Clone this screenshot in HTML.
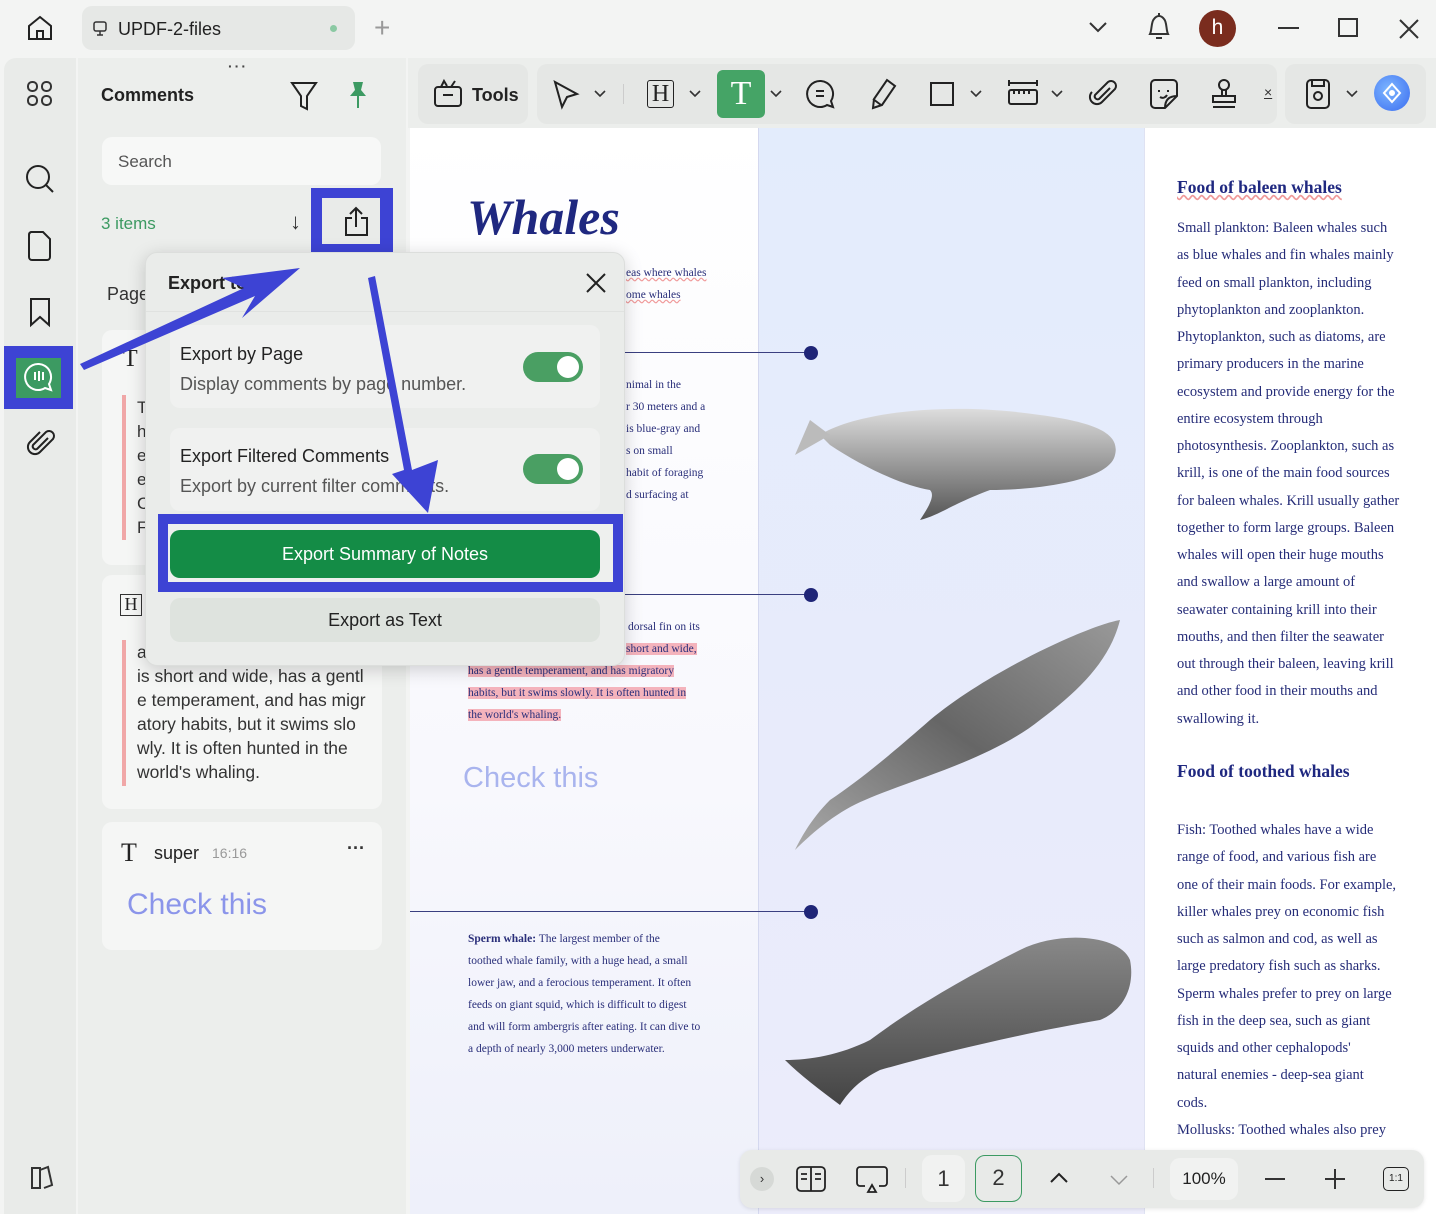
<!DOCTYPE html>
<html><head><meta charset="utf-8"><style>
*{box-sizing:border-box;margin:0;padding:0}
body{width:1436px;height:1214px;overflow:hidden;background:#f3f4f3;font-family:"Liberation Sans",sans-serif;position:relative;color:#222}
.a{position:absolute}
.ser{font-family:"Liberation Serif",serif}
.pt{font-size:11.5px;color:#2a2f7a;line-height:22px;white-space:nowrap}
.rt{font-family:"Liberation Serif",serif;font-size:14.5px;color:#252c78;line-height:27.25px;white-space:nowrap}
.card{background:#f5f6f5;border-radius:10px}
.tog{position:absolute;width:60px;height:30px;border-radius:15px;background:#4a9f63}
.tog:after{content:"";position:absolute;right:4px;top:4px;width:22px;height:22px;border-radius:50%;background:#fff}
svg{overflow:visible}
</style></head><body>
<!-- top bar -->
<svg class="a" style="left:26px;top:14px" width="28" height="28" viewBox="0 0 28 28" fill="none" stroke="#222" stroke-width="2"><path d="M3 12 L14 3 L25 12 V25 H3 Z"/><path d="M11 25 V17 H17 V25"/></svg>
<div class="a" style="left:82px;top:6px;width:273px;height:44px;background:#e6e8e6;border-radius:10px"></div>
<svg class="a" style="left:92px;top:21px" width="16" height="16" viewBox="0 0 16 16" fill="none" stroke="#333" stroke-width="1.5"><rect x="2" y="1" width="12" height="9" rx="2"/><path d="M8 10v4M5 14h6"/></svg>
<div class="a" style="left:118px;top:19px;font-size:18px;color:#222">UPDF-2-files</div>
<div class="a" style="left:330px;top:25px;width:7px;height:7px;border-radius:50%;background:#8bc9a3"></div>
<div class="a" style="left:374px;top:12px;font-size:28px;color:#999;font-weight:300">+</div>
<svg class="a" style="left:1088px;top:20px" width="20" height="14" fill="none" stroke="#333" stroke-width="2"><path d="M2 3l8 8 8-8"/></svg>
<svg class="a" style="left:1146px;top:12px" width="26" height="32" fill="none" stroke="#333" stroke-width="2"><path d="M4 22 C6 18 5 10 8 7 C11 3 15 3 18 7 C21 10 20 18 22 22 Z M10 26 h6"/><path d="M13 1v3"/></svg>
<div class="a" style="left:1199px;top:10px;width:37px;height:37px;border-radius:50%;background:#7a2c1e;color:#fff;font-size:21px;text-align:center;line-height:36px">h</div>
<div class="a" style="left:1278px;top:27px;width:21px;height:2px;background:#333"></div>
<div class="a" style="left:1338px;top:18px;width:20px;height:19px;border:2px solid #333"></div>
<svg class="a" style="left:1399px;top:19px" width="20" height="20" stroke="#333" stroke-width="2"><path d="M1 1l18 18M19 1L1 19"/></svg>

<!-- left rail -->
<div class="a" style="left:4px;top:58px;width:72px;height:1156px;background:#e9ebe9;border-radius:12px 0 0 0"></div>
<svg class="a" style="left:27px;top:81px" width="26" height="26" fill="none" stroke="#333" stroke-width="2"><rect x="1" y="1" width="9" height="9" rx="4"/><rect x="15" y="1" width="9" height="9" rx="4"/><rect x="1" y="15" width="9" height="9" rx="4"/><rect x="15" y="15" width="9" height="9" rx="4"/></svg>
<svg class="a" style="left:25px;top:164px" width="30" height="30" fill="none" stroke="#222" stroke-width="2"><circle cx="13" cy="13" r="11"/><path d="M21 21l7 7"/></svg>
<svg class="a" style="left:28px;top:231px" width="24" height="30" fill="none" stroke="#222" stroke-width="2"><path d="M3 1h12l7 7v18a3 3 0 0 1-3 3H4a3 3 0 0 1-3-3V4a3 3 0 0 1 2-3z"/></svg>
<svg class="a" style="left:29px;top:298px" width="22" height="28" fill="none" stroke="#222" stroke-width="2"><path d="M2 1h18v26l-9-8-9 8z"/></svg>
<div class="a" style="left:4px;top:346px;width:69px;height:63px;background:#3d43d4"></div>
<div class="a" style="left:16px;top:358px;width:45px;height:40px;background:#3c9a62"></div>
<svg class="a" style="left:24px;top:362px" width="30" height="32" fill="none" stroke="#fff" stroke-width="2"><path d="M15 2a13 13 0 1 0 6 24l6 2-2-6A13 13 0 0 0 15 2z"/><path d="M11 10v8M15 9v10M19 10v8"/></svg>
<svg class="a" style="left:28px;top:428px" width="26" height="30" fill="none" stroke="#222" stroke-width="2"><path d="M20 10L9 21a3 3 0 0 1-4-4L18 4a5 5 0 0 1 7 7L12 24a7 7 0 0 1-10-10L12 4"/></svg>
<svg class="a" style="left:28px;top:1164px" width="26" height="28" fill="none" stroke="#333" stroke-width="2"><path d="M4 4h8v20H4zM12 6l8-3 4 18-8 3"/></svg>

<!-- comments panel -->
<div class="a" style="left:78px;top:58px;width:328px;height:1156px;background:#eceeec"></div>
<div class="a" style="left:228px;top:58px;font-size:14px;letter-spacing:2px;color:#444;font-weight:bold">···</div>
<div class="a" style="left:101px;top:85px;font-size:18px;font-weight:bold;color:#222">Comments</div>
<svg class="a" style="left:290px;top:81px" width="28" height="30" fill="none" stroke="#222" stroke-width="2"><path d="M2 2h24L17 15v13l-6-3V15z"/></svg>
<svg class="a" style="left:346px;top:80px" width="24" height="30"><path d="M7 2h10l-2 8 5 6H4l5-6z" fill="#3c9a62"/><path d="M12 16v12" stroke="#3c9a62" stroke-width="2"/></svg>
<div class="a card" style="left:102px;top:137px;width:279px;height:48px;background:#f7f8f7"></div>
<div class="a" style="left:118px;top:152px;font-size:17px;color:#555">Search</div>
<div class="a" style="left:101px;top:214px;font-size:17px;color:#3c9a62">3 items</div>
<div class="a" style="left:290px;top:209px;font-size:22px;color:#333">↓</div>
<div class="a" style="left:311px;top:188px;width:82px;height:68px;background:#3d43d4"></div>
<div class="a" style="left:322px;top:198px;width:58px;height:46px;background:#e9ebe9"></div>
<svg class="a" style="left:343px;top:206px" width="28" height="32" fill="none" stroke="#222" stroke-width="2"><path d="M9 12H3v17h21V12h-6M13 21V2M7 8l6-6 6 6"/></svg>
<div class="a" style="left:107px;top:284px;font-size:18px;color:#333">Page</div>
<div class="a card" style="left:102px;top:330px;width:280px;height:235px"></div>
<div class="a ser" style="left:123px;top:346px;font-size:24px">T</div>
<div class="a" style="left:122px;top:395px;width:4px;height:145px;background:#f0a7a7"></div>
<div class="a" style="left:137px;top:396px;font-size:17px;line-height:24px;color:#333">T<br>h<br>e<br>e<br>C<br>F</div>
<div class="a card" style="left:102px;top:575px;width:280px;height:234px"></div>
<div class="a" style="left:120px;top:594px;width:22px;height:22px;border:1.5px solid #333;font-family:'Liberation Serif';font-size:18px;text-align:center;line-height:19px">H</div>
<div class="a" style="left:122px;top:640px;width:4px;height:146px;background:#f0a7a7"></div>
<div class="a" style="left:137px;top:640px;font-size:17.5px;line-height:24px;color:#333">a<br>is short and wide, has a gentl<br>e temperament, and has migr<br>atory habits, but it swims slo<br>wly. It is often hunted in the<br>world's whaling.</div>
<div class="a card" style="left:102px;top:822px;width:280px;height:128px"></div>
<div class="a ser" style="left:121px;top:838px;font-size:26px;color:#222">T</div>
<div class="a" style="left:154px;top:843px;font-size:18px;color:#222">super</div>
<div class="a" style="left:212px;top:845px;font-size:14px;color:#999">16:16</div>
<div class="a" style="left:347px;top:838px;font-size:18px;font-weight:bold;color:#333">···</div>
<div class="a" style="left:127px;top:888px;font-size:30px;color:#8b95ea">Check this</div>

<!-- toolbar -->
<div class="a" style="left:408px;top:58px;width:1028px;height:70px;background:#eceeec"></div>
<div class="a" style="left:418px;top:64px;width:110px;height:60px;background:#e5e7e5;border-radius:10px"></div>
<svg class="a" style="left:433px;top:78px" width="30" height="30" fill="none" stroke="#222" stroke-width="2"><rect x="2" y="9" width="26" height="19" rx="3"/><path d="M10 17h10M8 9l3-6 3 5M18 9l4-6"/></svg>
<div class="a" style="left:472px;top:85px;font-size:18px;font-weight:bold;color:#222">Tools</div>
<div class="a" style="left:537px;top:64px;width:740px;height:60px;background:#e5e7e5;border-radius:10px"></div>
<svg class="a" style="left:553px;top:80px" width="26" height="30" fill="none" stroke="#222" stroke-width="2"><path d="M2 2l22 12-10 3-5 10z"/></svg>
<svg class="a" style="left:594px;top:90px" width="12" height="8" fill="none" stroke="#333" stroke-width="1.6"><path d="M1 1l5 5 5-5"/></svg>
<div class="a" style="left:623px;top:84px;width:1px;height:20px;background:#ccc"></div>
<div class="a" style="left:647px;top:80px;width:27px;height:28px;border:1.8px solid #222;border-radius:3px;font-family:'Liberation Serif';font-size:24px;text-align:center;line-height:26px">H</div>
<svg class="a" style="left:689px;top:90px" width="12" height="8" fill="none" stroke="#333" stroke-width="1.6"><path d="M1 1l5 5 5-5"/></svg>
<div class="a" style="left:717px;top:70px;width:48px;height:48px;background:#45a466;border-radius:6px;color:#fff;font-family:'Liberation Serif';font-size:34px;text-align:center;line-height:48px;font-weight:300">T</div>
<svg class="a" style="left:770px;top:90px" width="12" height="8" fill="none" stroke="#333" stroke-width="1.6"><path d="M1 1l5 5 5-5"/></svg>
<svg class="a" style="left:806px;top:79px" width="30" height="30" fill="none" stroke="#222" stroke-width="2"><path d="M15 2a13 13 0 1 0 6 24l6 2-2-6A13 13 0 0 0 15 2zM10 12h8M10 17h8"/></svg>
<svg class="a" style="left:869px;top:78px" width="28" height="32" fill="none" stroke="#222" stroke-width="2"><path d="M18 2l8 6-13 19-9 3 1-9zM4 21l8 6"/></svg>
<div class="a" style="left:930px;top:82px;width:24px;height:24px;border:2px solid #222"></div>
<svg class="a" style="left:970px;top:90px" width="12" height="8" fill="none" stroke="#333" stroke-width="1.6"><path d="M1 1l5 5 5-5"/></svg>
<svg class="a" style="left:1007px;top:78px" width="32" height="30" fill="none" stroke="#222" stroke-width="2"><path d="M2 2v6M30 2v6M2 5h28"/><rect x="2" y="12" width="28" height="14" rx="2"/><path d="M7 12v4M12 12v4M17 12v4M22 12v4"/></svg>
<svg class="a" style="left:1051px;top:90px" width="12" height="8" fill="none" stroke="#333" stroke-width="1.6"><path d="M1 1l5 5 5-5"/></svg>
<svg class="a" style="left:1090px;top:78px" width="28" height="32" fill="none" stroke="#222" stroke-width="2"><path d="M20 10L9 21a3 3 0 0 1-4-4L18 4a5 5 0 0 1 7 7L12 24a7 7 0 0 1-10-10"/></svg>
<svg class="a" style="left:1149px;top:78px" width="30" height="32" fill="none" stroke="#222" stroke-width="2"><path d="M6 2h18a4 4 0 0 1 4 4v12L16 30H6a4 4 0 0 1-4-4V6a4 4 0 0 1 4-4zM28 18c-8 0-12 4-12 12M10 12v2M19 12v2M11 19c3 2 6 0 7-2"/></svg>
<svg class="a" style="left:1210px;top:78px" width="28" height="32" fill="none" stroke="#222" stroke-width="2"><circle cx="14" cy="7" r="5"/><path d="M12 12v6M16 12v6M3 18h22v6H3zM3 29h22"/></svg>
<div class="a" style="left:1264px;top:84px;font-size:14px;color:#333;text-decoration:underline">×</div>
<div class="a" style="left:1285px;top:64px;width:141px;height:60px;background:#e5e7e5;border-radius:10px"></div>
<svg class="a" style="left:1305px;top:78px" width="26" height="32" fill="none" stroke="#222" stroke-width="2"><rect x="2" y="2" width="22" height="28" rx="4"/><path d="M7 2v6h12V2"/><circle cx="13" cy="18" r="4"/></svg>
<svg class="a" style="left:1346px;top:90px" width="12" height="8" fill="none" stroke="#333" stroke-width="1.6"><path d="M1 1l5 5 5-5"/></svg>
<div class="a" style="left:1374px;top:75px;width:36px;height:36px;border-radius:50%;background:radial-gradient(circle at 40% 40%,#7db6ff,#3a6cf0)"></div>
<svg class="a" style="left:1381px;top:82px" width="22" height="22" fill="none" stroke="#fff" stroke-width="2"><path d="M11 2l8 9-8 9-8-9z"/><circle cx="11" cy="11" r="2" fill="#fff"/></svg>

<!-- document -->
<div class="a" style="left:410px;top:128px;width:348px;height:1086px;background:linear-gradient(180deg,#fff 0%,#f8f8fd 60%,#eef0fa 100%)"></div>
<div class="a" style="left:758px;top:128px;width:387px;height:1086px;background:linear-gradient(180deg,#e3ecfc 0%,#e8ebfb 60%,#ececfb 100%);border-left:1px solid #d4d8ef;border-right:1px solid #dfe2f2"></div>
<div class="a" style="left:1145px;top:128px;width:291px;height:1086px;background:#fff"></div>

<div class="a ser" style="left:467px;top:188px;font-size:50px;font-weight:bold;font-style:italic;color:#1f2880">Whales</div>
<div class="a pt ser" style="left:626px;top:262px;text-decoration:underline wavy #f09a9a">eas where whales<br>ome whales</div>
<div class="a" style="left:410px;top:352px;width:401px;height:1px;background:#3a3f80"></div>
<div class="a" style="left:804px;top:346px;width:14px;height:14px;border-radius:50%;background:#1f2577"></div>
<div class="a pt ser" style="left:626px;top:374px">nimal in the<br>r 30 meters and a<br>is blue-gray and<br>s on small<br>habit of foraging<br>d surfacing at</div>
<div class="a" style="left:410px;top:594px;width:401px;height:1px;background:#3a3f80"></div>
<div class="a" style="left:804px;top:588px;width:14px;height:14px;border-radius:50%;background:#1f2577"></div>
<div class="a pt ser" style="left:628px;top:616px">dorsal fin on its</div>
<div class="a pt ser" style="left:626px;top:638px"><span style="background:#f4b3bc">short and wide,</span></div>
<div class="a pt ser" style="left:468px;top:660px"><span style="background:#f4b3bc">has a gentle temperament, and has migratory</span><br><span style="background:#f4b3bc">habits, but it swims slowly. It is often hunted in</span><br><span style="background:#f4b3bc">the world's whaling.</span></div>
<div class="a" style="left:463px;top:762px;font-size:29px;color:#a9b4ee">Check this</div>
<div class="a" style="left:410px;top:911px;width:401px;height:1px;background:#3a3f80"></div>
<div class="a" style="left:804px;top:905px;width:14px;height:14px;border-radius:50%;background:#1f2577"></div>
<div class="a pt ser" style="left:468px;top:928px"><b>Sperm whale:</b> The largest member of the<br>toothed whale family, with a huge head, a small<br>lower jaw, and a ferocious temperament. It often<br>feeds on giant squid, which is difficult to digest<br>and will form ambergris after eating. It can dive to<br>a depth of nearly 3,000 meters underwater.</div>

<!-- whales -->
<svg class="a" style="left:790px;top:395px" width="340" height="130"><defs><linearGradient id="g1" x1="0" y1="0" x2="0" y2="1"><stop offset="0" stop-color="#ddd"/><stop offset="1" stop-color="#555"/></linearGradient></defs><path d="M30 40 C60 20 150 5 250 20 C310 28 330 40 325 60 C320 85 250 95 200 95 C160 110 150 120 130 125 C140 110 145 100 140 95 C110 90 70 70 40 50 Z" fill="url(#g1)"/><path d="M5 60 L40 40 L20 25 Z" fill="#bbb"/></svg>
<svg class="a" style="left:790px;top:610px" width="340" height="245"><defs><linearGradient id="g2" x1="1" y1="0" x2="0" y2="1"><stop offset="0" stop-color="#999"/><stop offset="0.5" stop-color="#666"/><stop offset="1" stop-color="#aaa"/></linearGradient></defs><path d="M330 10 C300 15 200 60 140 110 C100 145 70 170 40 190 C20 210 10 230 5 240 C25 220 50 200 75 190 C120 170 200 150 250 110 C290 80 320 50 330 10 Z" fill="url(#g2)"/></svg>
<svg class="a" style="left:780px;top:930px" width="355" height="185"><defs><linearGradient id="g3" x1="0" y1="0" x2="0" y2="1"><stop offset="0" stop-color="#888"/><stop offset="1" stop-color="#444"/></linearGradient></defs><path d="M350 30 C340 5 280 0 240 20 C180 50 130 80 90 110 C60 125 30 130 5 130 C20 145 40 160 60 175 C70 160 80 150 100 140 C170 120 260 100 320 90 C345 80 355 55 350 30 Z" fill="url(#g3)"/></svg>

<!-- right page text -->
<div class="a ser" style="left:1177px;top:177px;font-size:17.5px;font-weight:bold;color:#1f2880;text-decoration:underline wavy #f09a9a">Food of baleen whales</div>
<div class="a rt" style="left:1177px;top:215px">Small plankton: Baleen whales such<br>as blue whales and fin whales mainly<br>feed on small plankton, including<br>phytoplankton and zooplankton.<br>Phytoplankton, such as diatoms, are<br>primary producers in the marine<br>ecosystem and provide energy for the<br>entire ecosystem through<br>photosynthesis. Zooplankton, such as<br>krill, is one of the main food sources<br>for baleen whales. Krill usually gather<br>together to form large groups. Baleen<br>whales will open their huge mouths<br>and swallow a large amount of<br>seawater containing krill into their<br>mouths, and then filter the seawater<br>out through their baleen, leaving krill<br>and other food in their mouths and<br>swallowing it.</div>
<div class="a ser" style="left:1177px;top:761px;font-size:17.5px;font-weight:bold;color:#1f2880">Food of toothed whales</div>
<div class="a rt" style="left:1177px;top:817px">Fish: Toothed whales have a wide<br>range of food, and various fish are<br>one of their main foods. For example,<br>killer whales prey on economic fish<br>such as salmon and cod, as well as<br>large predatory fish such as sharks.<br>Sperm whales prefer to prey on large<br>fish in the deep sea, such as giant<br>squids and other cephalopods'<br>natural enemies - deep-sea giant<br>cods.<br>Mollusks: Toothed whales also prey<br>octopuses. Sperm whales are experts</div>

<!-- bottom bar -->
<div class="a" style="left:740px;top:1150px;width:684px;height:58px;background:#e8eae8;border-radius:12px;box-shadow:0 1px 4px rgba(0,0,0,.1)"></div>
<div class="a" style="left:750px;top:1167px;width:24px;height:24px;border-radius:50%;background:#d6d9d6;font-size:13px;text-align:center;line-height:24px;color:#333">›</div>
<svg class="a" style="left:796px;top:1166px" width="30" height="26" fill="none" stroke="#222" stroke-width="1.8"><rect x="1" y="1" width="28" height="24" rx="4"/><path d="M15 1v24M5 8h6M5 13h6M19 8h6M19 13h6"/></svg>
<svg class="a" style="left:856px;top:1166px" width="32" height="28" fill="none" stroke="#222" stroke-width="1.8"><path d="M9 20H4a3 3 0 0 1-3-3V4a3 3 0 0 1 3-3h24a3 3 0 0 1 3 3v13a3 3 0 0 1-3 3h-5M16 19l-4 7h8z"/></svg>
<div class="a" style="left:905px;top:1168px;width:1px;height:20px;background:#ccc"></div>
<div class="a" style="left:922px;top:1155px;width:43px;height:47px;background:#f1f2f1;border-radius:10px;font-size:22px;text-align:center;line-height:47px;color:#333">1</div>
<div class="a" style="left:975px;top:1155px;width:47px;height:47px;border:1.5px solid #3c9a62;border-radius:10px;font-size:22px;text-align:center;line-height:44px;color:#333">2</div>
<svg class="a" style="left:1050px;top:1172px" width="18" height="12" fill="none" stroke="#222" stroke-width="2"><path d="M1 10l8-8 8 8"/></svg>
<svg class="a" style="left:1110px;top:1174px" width="18" height="12" fill="none" stroke="#999" stroke-width="1.5"><path d="M1 2l8 8 8-8"/></svg>
<div class="a" style="left:1153px;top:1168px;width:1px;height:20px;background:#ccc"></div>
<div class="a" style="left:1170px;top:1158px;width:68px;height:42px;background:#f1f2f1;border-radius:10px;font-size:17px;text-align:center;line-height:42px;color:#222">100%</div>
<div class="a" style="left:1265px;top:1178px;width:20px;height:2px;background:#333"></div>
<div class="a" style="left:1325px;top:1178px;width:20px;height:2px;background:#333"></div>
<div class="a" style="left:1334px;top:1169px;width:2px;height:20px;background:#333"></div>
<div class="a" style="left:1383px;top:1167px;width:26px;height:24px;border:1.8px solid #222;border-radius:5px;font-size:10px;text-align:center;line-height:21px">1:1</div>

<!-- popup -->
<div class="a" style="left:145px;top:252px;width:480px;height:414px;background:#eaecea;border-radius:12px;box-shadow:0 4px 18px rgba(0,0,0,.18);border:1px solid #dcdedc"></div>
<div class="a" style="left:168px;top:273px;font-size:18px;font-weight:bold;color:#222">Export to P</div>
<svg class="a" style="left:586px;top:273px" width="20" height="20" stroke="#222" stroke-width="2"><path d="M1 1l18 18M19 1L1 19"/></svg>
<div class="a" style="left:146px;top:311px;width:478px;height:1px;background:#e0e2e0"></div>
<div class="a card" style="left:170px;top:325px;width:430px;height:83px;background:#f0f1f0"></div>
<div class="a" style="left:180px;top:344px;font-size:18px;color:#222">Export by Page</div>
<div class="a" style="left:180px;top:374px;font-size:18px;color:#555">Display comments by page number.</div>
<div class="tog" style="left:523px;top:352px"></div>
<div class="a card" style="left:170px;top:428px;width:430px;height:83px;background:#f0f1f0"></div>
<div class="a" style="left:180px;top:446px;font-size:18px;color:#222">Export Filtered Comments</div>
<div class="a" style="left:180px;top:476px;font-size:18px;color:#555">Export by current filter comments.</div>
<div class="tog" style="left:523px;top:454px"></div>
<div class="a" style="left:158px;top:514px;width:465px;height:78px;border:10px solid #3d43d4;border-left-width:10px;background:#eef0ee"></div>
<div class="a" style="left:170px;top:530px;width:430px;height:48px;background:#148c46;border-radius:10px;color:#fff;font-size:18px;text-align:center;line-height:48px">Export Summary of Notes</div>
<div class="a" style="left:170px;top:598px;width:430px;height:44px;background:#dee3de;border-radius:10px;font-size:18px;text-align:center;line-height:44px;color:#222">Export as Text</div>

<!-- arrows -->
<svg class="a" style="left:0;top:0" width="700" height="600"><path d="M84 370 L255 296 L242 318 L300 268 L222 278 L244 288 L80 364 Z" fill="#3d43d4"/><path d="M368 278 L375 276 L412 470 L438 460 L428 513 L392 474 L404 470 Z" fill="#3d43d4"/></svg>
</body></html>
